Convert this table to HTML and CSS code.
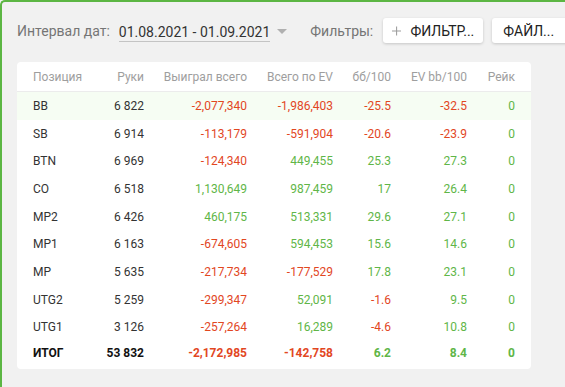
FILE: index.html
```html
<!DOCTYPE html>
<html lang="ru">
<head>
<meta charset="utf-8">
<link rel="stylesheet" href="styles.css">
</head>
<body>
<div class="page">
  <div class="toolbar">
    <span class="label">Интервал дат:</span>
    <span class="date">01.08.2021 - 01.09.2021</span>
    <span class="caret"></span>
    <span class="label filters">Фильтры:</span>
    <button class="btn btn-filter"><svg class="plus" width="12" height="12" viewBox="0 0 12 12"><path d="M6 0v12M0 6h12" stroke="#9e9e9e" stroke-width="1.4"/></svg>ФИЛЬТР...</button>
    <button class="btn btn-file">ФАЙЛ...</button>
  </div>
  <div class="card">
    <div class="row head">
      <span class="c1">Позиция</span><span>Руки</span><span>Выиграл всего</span><span>Всего по EV</span><span>бб/100</span><span>EV bb/100</span><span>Рейк</span>
    </div>
    <div class="row hl"><span class="c1">BB</span><span>6 822</span><span class="r">-2,077,340</span><span class="r">-1,986,403</span><span class="r">-25.5</span><span class="r">-32.5</span><span class="g">0</span></div>
    <div class="row"><span class="c1">SB</span><span>6 914</span><span class="r">-113,179</span><span class="r">-591,904</span><span class="r">-20.6</span><span class="r">-23.9</span><span class="g">0</span></div>
    <div class="row"><span class="c1">BTN</span><span>6 969</span><span class="r">-124,340</span><span class="g">449,455</span><span class="g">25.3</span><span class="g">27.3</span><span class="g">0</span></div>
    <div class="row"><span class="c1">CO</span><span>6 518</span><span class="g">1,130,649</span><span class="g">987,459</span><span class="g">17</span><span class="g">26.4</span><span class="g">0</span></div>
    <div class="row"><span class="c1">MP2</span><span>6 426</span><span class="g">460,175</span><span class="g">513,331</span><span class="g">29.6</span><span class="g">27.1</span><span class="g">0</span></div>
    <div class="row"><span class="c1">MP1</span><span>6 163</span><span class="r">-674,605</span><span class="g">594,453</span><span class="g">15.6</span><span class="g">14.6</span><span class="g">0</span></div>
    <div class="row"><span class="c1">MP</span><span>5 635</span><span class="r">-217,734</span><span class="r">-177,529</span><span class="g">17.8</span><span class="g">23.1</span><span class="g">0</span></div>
    <div class="row"><span class="c1">UTG2</span><span>5 259</span><span class="r">-299,347</span><span class="g">52,091</span><span class="r">-1.6</span><span class="g">9.5</span><span class="g">0</span></div>
    <div class="row"><span class="c1">UTG1</span><span>3 126</span><span class="r">-257,264</span><span class="g">16,289</span><span class="r">-4.6</span><span class="g">10.8</span><span class="g">0</span></div>
    <div class="row total"><span class="c1">ИТОГ</span><span>53 832</span><span class="r">-2,172,985</span><span class="r">-142,758</span><span class="g">6.2</span><span class="g">8.4</span><span class="g">0</span></div>
  </div>
</div>
</body>
</html>
```
FILE: styles.css
```css
html, body {
  margin: 0;
  padding: 0;
  background: #f1f1f1;
  font-family: Roboto, "Noto Sans", sans-serif;
}
.page {
  height: 387px;
  box-sizing: border-box;
  border-top: 2px solid #5cb643;
  border-left: 2px solid #5cb643;
  border-top-left-radius: 5px;
  padding: 16px 0 0 15px;
  overflow: hidden;
}
.toolbar {
  display: flex;
  align-items: center;
  height: 25px;
  white-space: nowrap;
}
.label {
  font-size: 14px;
  color: #757575;
}
.date {
  font-size: 14px;
  color: #333;
  margin-left: 9px;
  border-bottom: 1px solid #c4c4c4;
  line-height: 18px;
  margin-top: 3px;
}
.caret {
  width: 0;
  height: 0;
  border-left: 5px solid transparent;
  border-right: 5px solid transparent;
  border-top: 5px solid #b0b0b0;
  margin-left: 7px;
  margin-top: 1px;
}
.filters {
  margin-left: 23px;
}
.btn {
  display: flex;
  align-items: center;
  height: 25px;
  box-sizing: border-box;
  border: none;
  background: #fff;
  border-radius: 3px;
  box-shadow: 0 1px 3px rgba(0,0,0,0.18);
  font-family: Roboto, sans-serif;
  font-size: 14px;
  font-weight: 400;
  color: #222;
  padding: 0 9px;
  flex-shrink: 0;
}
.btn-filter {
  margin-left: 10px;
  width: 100px;
}
.plus {
  margin-right: 9px;
}
.btn-file {
  margin-left: 9px;
  width: 80px;
  padding-left: 11px;
}
.card {
  margin-top: 19px;
  width: 514px;
  background: #fff;
  border-radius: 4px;
  padding-bottom: 4px;
}
.row {
  display: grid;
  grid-template-columns: 67px 44px 103px 86px 58px 76px 48px;
  padding: 0 16px;
  height: 27.7px;
  align-items: center;
  font-size: 12px;
  color: #333;
  text-align: right;
}
.row .c1 {
  text-align: left;
}
.head {
  height: 29px;
  color: #9e9e9e;
  border-bottom: 1px solid #ececec;
}
.hl {
  background: #f6fdf3;
}
.r { color: #e2471f; }
.g { color: #5fb648; }
.total {
  height: 24px;
  font-weight: 700;
  color: #111;
}
```
